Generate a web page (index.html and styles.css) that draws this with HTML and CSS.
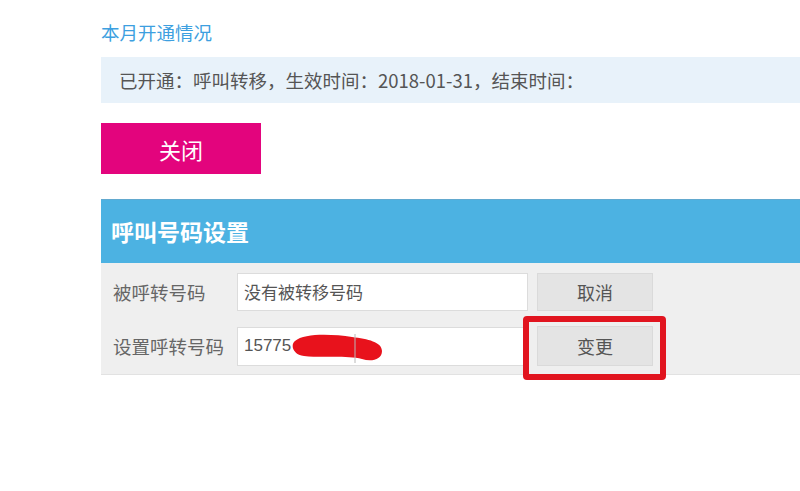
FILE: index.html
```html
<!DOCTYPE html>
<html lang="zh-CN">
<head>
<meta charset="utf-8">
<title>呼叫转移</title>
<link rel="stylesheet" href="styles.css">
</head>
<body>
<div class="page">
  <div class="title">本月开通情况</div>
  <div class="info">已开通：呼叫转移，生效时间：2018-01-31，结束时间：</div>
  <button class="close-btn">关闭</button>
  <div class="panel">
    <div class="panel-head">呼叫号码设置</div>
    <div class="panel-body">
      <div class="row">
        <span class="label">被呼转号码</span>
        <div class="input">没有被转移号码</div>
        <div class="btn-wrap"><button class="btn">取消</button></div>
      </div>
      <div class="row row-2">
        <span class="label">设置呼转号码</span>
        <div class="input input-num">15775
          <svg class="scribble" width="92" height="32" viewBox="0 0 92 32">
            <path d="M3,9 C12,1 40,2 60,5 C76,7 90,10 90,19 C90,28 79,30 70,27 C55,23 30,26 12,24 C1,23 -2,13 3,9 Z" fill="#e8121c"/>
            <line x1="63" y1="2" x2="63" y2="31" stroke="#b8b8b8" stroke-width="1"/>
          </svg>
        </div>
        <div class="btn-wrap">
          <button class="btn btn-tall">变更</button>
          <div class="highlight"></div>
        </div>
      </div>
    </div>
  </div>
</div>
</body>
</html>
```

FILE: styles.css
```css
* { box-sizing: border-box; }
html, body { margin: 0; padding: 0; background: #ffffff; }
body {
  font-family: "Noto Sans CJK SC", "Noto Sans", "DejaVu Sans", sans-serif;
}
.page {
  min-height: 491px;
  padding: 21px 0 0 101px;
}
.title {
  font-size: 18.5px;
  line-height: 22px;
  color: #3d9fe0;
}
.info {
  margin-top: 14px;
  height: 46px;
  line-height: 46px;
  padding-left: 18px;
  background: #e8f2fa;
  color: #555555;
  font-size: 18.5px;
  white-space: nowrap;
}
.close-btn {
  display: block;
  margin-top: 20px;
  width: 160px;
  height: 51px;
  border: none;
  background: #e3047d;
  color: #ffffff;
  font-family: inherit;
  font-size: 22px;
  padding: 0;
}
.panel {
  margin-top: 25px;
}
.panel-head {
  height: 64px;
  line-height: 62px;
  padding-left: 10px;
  background: #4cb2e2;
  border-top: 1px solid #62a9cf;
  color: #ffffff;
  font-size: 23px;
  font-weight: bold;
}
.panel-body {
  background: #efefef;
  padding: 10px 0 8px 12px;
  border-bottom: 1px solid #e2e2e2;
}
.row {
  display: flex;
  align-items: center;
}
.row-2 {
  margin-top: 15px;
}
.label {
  width: 124px;
  color: #666666;
  font-size: 18.5px;
  line-height: 24px;
  white-space: nowrap;
}
.input {
  position: relative;
  width: 291px;
  height: 38px;
  line-height: 36px;
  background: #ffffff;
  border: 1px solid #dcdcdc;
  padding-left: 6px;
  color: #555555;
  font-size: 17px;
}
.input-num {
  height: 39px;
  font-family: "Liberation Sans", Arial, sans-serif;
  font-size: 17px;
}
.scribble {
  position: absolute;
  left: 54px;
  top: 4px;
}
.btn-wrap {
  position: relative;
  margin-left: 9px;
}
.btn {
  display: block;
  width: 116px;
  height: 38px;
  background: #e4e4e4;
  border: 1px solid #dadada;
  color: #555555;
  font-family: inherit;
  font-size: 18px;
  padding: 0;
}
.btn-tall {
  height: 40px;
}
.highlight {
  position: absolute;
  left: -14px;
  top: -10px;
  width: 143px;
  height: 64px;
  border: 6px solid #e1141f;
  border-radius: 4px;
}
```
